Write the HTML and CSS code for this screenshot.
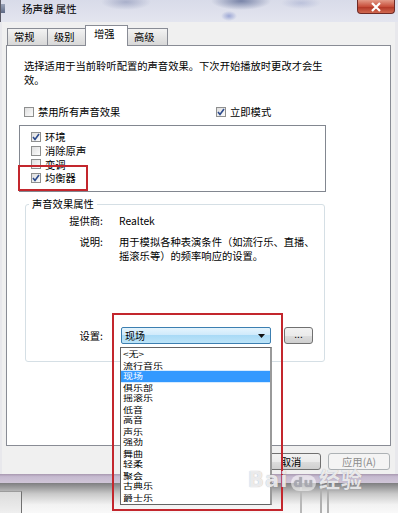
FILE: index.html
```html
<!DOCTYPE html>
<html lang="zh-CN">
<head>
<meta charset="utf-8">
<title>扬声器 属性</title>
<link rel="stylesheet" href="styles.css">
</head>
<body>
<div class="screen">
  <div class="titlebar">
    <span class="app-icon"></span>
    <span class="title">扬声器 属性</span>
    <span class="close">
      <svg width="12" height="10" viewBox="0 0 12 10"><path d="M2 1 L10 9 M10 1 L2 9" stroke="#fff" stroke-width="2.2" fill="none"/></svg>
    </span>
  </div>

  <div class="dialog">
    <div class="tabs">
      <span class="tab">常规</span>
      <span class="tab">级别</span>
      <span class="tab active">增强</span>
      <span class="tab">高级</span>
    </div>

    <div class="panel">
      <p class="intro">选择适用于当前聆听配置的声音效果。下次开始播放时更改才会生<br>效。</p>

      <div class="opts">
        <label class="cbrow"><span class="cb"></span>禁用所有声音效果</label>
        <label class="cbrow"><span class="cb"><svg width="8" height="8" viewBox="0 0 8 8"><path d="M1 4 L3 6.5 L7 1" stroke="#2c4a8c" stroke-width="1.6" fill="none"/></svg></span>立即模式</label>
      </div>

      <div class="listbox">
        <div class="cbrow item"><span class="cb"><svg width="8" height="8" viewBox="0 0 8 8"><path d="M1 4 L3 6.5 L7 1" stroke="#2c4a8c" stroke-width="1.6" fill="none"/></svg></span>环境</div>
        <div class="cbrow item"><span class="cb"></span>消除原声</div>
        <div class="cbrow item"><span class="cb"></span>变调</div>
        <div class="cbrow item"><span class="cb"><svg width="8" height="8" viewBox="0 0 8 8"><path d="M1 4 L3 6.5 L7 1" stroke="#2c4a8c" stroke-width="1.6" fill="none"/></svg></span>均衡器</div>
      </div>

      <fieldset class="group">
        <legend>声音效果属性</legend>
        <div class="prop">
          <span class="plabel">提供商:</span>
          <span class="pval">Realtek</span>
        </div>
        <div class="prop desc">
          <span class="plabel">说明:</span>
          <span class="pval">用于模拟各种表演条件（如流行乐、直播、<br>摇滚乐等）的频率响应的设置。</span>
        </div>
        <div class="prop setting">
          <span class="plabel">设置:</span>
          <div class="combo">
            <span>现场</span>
            <svg width="7" height="4" viewBox="0 0 7 4"><path d="M0 0 H7 L3.5 4 Z" fill="#111"/></svg>
          </div>
          <span class="btn dots">...</span>
        </div>
      </fieldset>
    </div>

    <div class="buttons">
      <span class="btn big">确定</span>
      <span class="btn big">取消</span>
      <span class="btn big disabled">应用(A)</span>
    </div>
  </div>

  <div class="frame-bottom"></div>
  <div class="below">
    <span class="below-box"></span>
    <span class="below-lines"></span>
  </div>

  <div class="dropdown">
    <ul class="options">
      <li>&lt;无&gt;</li>
      <li>流行音乐</li>
      <li class="sel">现场</li>
      <li>俱乐部</li>
      <li>摇滚乐</li>
      <li>低音</li>
      <li>高音</li>
      <li>声乐</li>
      <li>强劲</li>
      <li>舞曲</li>
      <li>轻柔</li>
      <li>聚会</li>
      <li>古典乐</li>
      <li>爵士乐</li>
    </ul>
  </div>

  <div class="mark mark-eq"></div>
  <div class="mark mark-combo"></div>

  <div class="watermark">Bai<span class="paw">du</span>经验</div>
</div>
</body>
</html>
```

FILE: styles.css
```css
* { box-sizing: border-box; }
html, body { margin: 0; padding: 0; }
body {
  width: 398px;
  height: 513px;
  overflow: hidden;
  font-family: "Noto Sans CJK SC", "Liberation Sans", sans-serif;
  font-size: 10.3px;
  color: #000;
  background: #f0f0f0;
}
.screen {
  position: relative;
  width: 398px;
  height: 513px;
  overflow: hidden;
  background: #e8e8ec;
}

/* title bar (aero glass) */
.titlebar {
  height: 22px;
  display: flex;
  align-items: flex-start;
  background:
    radial-gradient(ellipse 30px 9px at 240px 1px, rgba(80,95,140,0.7), rgba(80,95,140,0) 100%),
    radial-gradient(ellipse 25px 8px at 125px 2px, rgba(120,130,170,0.5), rgba(120,130,170,0) 100%),
    radial-gradient(ellipse 20px 6px at 300px 3px, rgba(150,160,200,0.45), rgba(150,160,200,0) 100%),
    radial-gradient(ellipse 8px 5px at 228px 16px, rgba(90,110,190,0.5), rgba(90,110,190,0) 100%),
    linear-gradient(#d8dbe9, #e3e5ef);
  border-left: 1px solid #5a5a66;
}
.app-icon {
  width: 4px;
  height: 9px;
  margin-top: 4px;
  background: linear-gradient(#9aa3b8, #5e6a86);
}
.title {
  margin-left: 17px;
  margin-top: 2px;
  line-height: 14px;
  font-size: 10.5px;
}
.close {
  margin-left: auto;
  margin-right: 3px;
  width: 38px;
  height: 14px;
  display: flex;
  align-items: center;
  justify-content: center;
  border: 1px solid #6e2a26;
  border-top: none;
  border-radius: 0 0 4px 4px;
  background: linear-gradient(#e39a88, #c8503c 50%, #b03424 51%, #d06850);
}

/* dialog */
.dialog {
  margin-left: 2px;
  width: 393px;
  padding: 0 4px 4px 4px;
  background: #f0f0f0;
}
.tabs {
  height: 23px;
  display: flex;
  align-items: flex-end;
  padding-left: 1px;
  position: relative;
  z-index: 2;
}
.tab {
  width: 41px;
  height: 17px;
  margin-right: -1px;
  padding-left: 6px;
  line-height: 16px;
  border: 1px solid #898c95;
  border-bottom: none;
  background: linear-gradient(#f3f3f3, #e5e5e5 50%, #d8d8d8);
}
.tab.active {
  width: 43px;
  height: 21px;
  margin: 0 -1px -1px -2px;
  padding-left: 8px;
  line-height: 15px;
  background: #fff;
  position: relative;
}
.panel {
  height: 401px;
  border: 1px solid #898c95;
  background: #fff;
  padding: 13px 0 0 0;
}
.intro {
  margin: 0 0 0 17px;
  line-height: 14px;
  white-space: nowrap;
}
.opts {
  margin: 18px 0 0 17px;
  display: grid;
  grid-template-columns: 192px auto;
}
.cbrow {
  display: flex;
  align-items: center;
  height: 14px;
  line-height: 14px;
}
.cb {
  width: 10px;
  height: 10px;
  margin-right: 4px;
  border: 1px solid #8e8f8f;
  background: linear-gradient(135deg, #dedede, #fcfcfc);
  display: inline-flex;
  align-items: center;
  justify-content: center;
  flex: none;
}
.listbox {
  margin: 6px 0 0 12px;
  width: 307px;
  height: 67px;
  border: 1px solid #828790;
  padding: 4px 0 0 11px;
}
.listbox .item { height: 13.7px; line-height: 13px; }

.group {
  margin: 5px 0 0 18px;
  width: 300px;
  height: 165px;
  border: 1px solid #d5dfe5;
  border-radius: 3px;
  padding: 3px 0 0 0;
}
.group legend {
  margin-left: 3px;
  padding: 0 3px;
  line-height: 14px;
}
.prop {
  display: flex;
  align-items: flex-start;
  line-height: 14px;
}
.plabel {
  width: 77px;
  text-align: right;
  flex: none;
}
.pval {
  margin-left: 16px;
  white-space: nowrap;
}
.desc { margin-top: 7px; }
.setting {
  margin-top: 64px;
  align-items: center;
}
.combo {
  margin-left: 18px;
  width: 150px;
  height: 17px;
  border: 1px solid #3c7fb1;
  border-radius: 2px;
  background: linear-gradient(#e5f4fd, #d0eafb 45%, #a9daf6 50%, #bde4f8);
  display: flex;
  align-items: center;
  justify-content: space-between;
  padding: 0 5px 0 3px;
  font-size: 10px;
}
.btn {
  display: inline-flex;
  align-items: center;
  justify-content: center;
  border: 1px solid #707070;
  border-radius: 3px;
  background: linear-gradient(#f2f2f2, #ebebeb 50%, #dddddd 51%, #cfcfcf);
}
.dots {
  margin-left: 13px;
  width: 29px;
  height: 17px;
  font-size: 10px;
  line-height: 10px;
  padding-bottom: 3px;
}
.buttons {
  margin-top: 7px;
  display: flex;
  justify-content: flex-end;
  gap: 7px;
  padding-right: 1px;
}
.btn.big {
  width: 60px;
  height: 17px;
  line-height: 13px;
}
.btn.big.disabled {
  width: 62px;
  color: #8d8d8d;
  border-color: #adb2b5;
  background: #f4f4f4;
}

.frame-bottom {
  height: 9px;
  background: linear-gradient(#a898b0, #c6bad0 30%, #d0c6d8);
}
.below {
  height: 31px;
  display: flex;
  background: linear-gradient(#7e7e80, #c9c9c9 35%, #f2f2f2 70%, #fafafa);
}
.below-box {
  margin-top: 8px;
  width: 22px;
  height: 23px;
  background: linear-gradient(#dcdcdc, #f0f0f0);
  border-top: 1px solid #9c9c9c;
  border-right: 1px solid #707070;
}
.below-lines {
  margin-left: 264px;
  width: 50px;
  background:
    linear-gradient(90deg, transparent 0 14px, #b8b8b8 14px 16px, transparent 16px 34px, #b0b0b0 34px 36px, transparent 36px 41px, #b0b0b0 41px 43px, transparent 43px);
}

/* popup list (the reference is squashed vertically) */
.dropdown {
  position: absolute;
  left: 120px;
  top: 347px;
  width: 152px;
  height: 158px;
  background: #fff;
  border: 1px solid #646464;
  border-right: 2px solid #9a9a9a;
  z-index: 5;
}
.options {
  margin: 0;
  padding: 1px 0 0 0;
  list-style: none;
  font-size: 10px;
  transform: scaleY(0.76);
  transform-origin: 0 0;
}
.options li {
  height: 14.5px;
  line-height: 14.5px;
  padding-left: 2px;
}
.options li.sel {
  background: #3399ff;
  color: #fff;
}

/* red annotation boxes */
.mark {
  position: absolute;
  border: 2px solid #c3262d;
  z-index: 6;
}
.mark-eq { left: 18px; top: 165px; width: 70px; height: 26px; }
.mark-combo { left: 112px; top: 313px; width: 171px; height: 198px; }

/* watermark */
.watermark {
  position: absolute;
  left: 248px;
  top: 470px;
  z-index: 7;
  font-family: "DejaVu Sans", "Noto Sans CJK SC", sans-serif;
  font-size: 21px;
  font-weight: bold;
  line-height: 20px;
  color: rgba(255,255,255,0.8);
  text-shadow: 0 0 1px rgba(120,120,130,0.7);
  letter-spacing: 1px;
}
.watermark .paw {
  display: inline-block;
  margin: 0 3px;
  padding: 0 2px;
  font-size: 13px;
  line-height: 16px;
  border-radius: 8px;
  background: rgba(255,255,255,0.55);
  color: rgba(170,170,180,0.9);
}
```
